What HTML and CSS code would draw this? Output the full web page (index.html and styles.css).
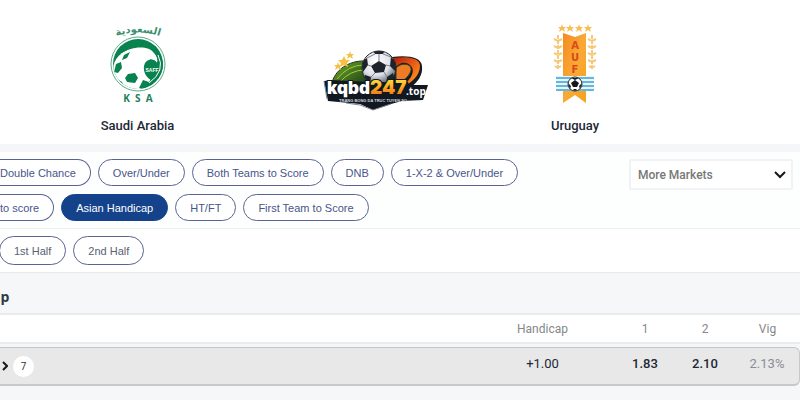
FILE: index.html
```html
<!DOCTYPE html>
<html lang="en">
<head>
  <meta charset="UTF-8">
  <meta name="viewport" content="width=device-width, initial-scale=1.0">
  <title>Saudi Arabia - Uruguay</title>
  <link rel="stylesheet" href="styles.css">
</head>
<body>
  <header class="match">
    <div class="team">
      <svg class="crest" viewBox="0 0 80 84" aria-hidden="true">
        <defs>
          <path id="crestArc" d="M13 16 Q40 5 67 16"/>
          <clipPath id="crestClip"><circle cx="40" cy="42" r="25"/></clipPath>
        </defs>
        <text class="crest-arabic" text-anchor="middle"><textPath href="#crestArc" startOffset="50%">السعودية</textPath></text>
        <circle cx="40" cy="42" r="27" fill="#fff" stroke="#5fa98c" stroke-width="1"/>
        <g clip-path="url(#crestClip)">
          <rect x="14" y="16" width="54" height="52" fill="#08824f"/>
          <circle cx="35" cy="48" r="20" fill="#fff"/>
          <path d="M23 32 C31 25 50 22 56 31 C59 34 60 38 59 41 C55 36 50 37 47 41 L32 42Z" fill="#fff"/>
          <path d="M59 41 C55 36 50 37 47 41 C44 47 47 55 53 58 L66 56 V38Z" fill="#08824f"/>
          <path d="M26 33 L32 30 L29 36 L24 38Z M18 42 L23 40 L24 46 L20 51 L16 50Z M30 52 L37 51 L40 56 L37 61 L29 60 L27 56Z M45 58 L51 60 L48 66 L41 66Z M19 57 L24 60 L26 65 L20 64Z" fill="#08824f"/>
          <path d="M60 33 Q68 49 51 61" fill="none" stroke="#fff" stroke-width="1"/>
        </g>
        <text class="crest-saff" x="54" y="50" text-anchor="middle">SAFF</text>
        <text class="crest-code" x="40" y="80" text-anchor="middle">K&#160; S&#160; A</text>
      </svg>
      <span class="team-name">Saudi Arabia</span>
    </div>
    <div class="brand">
      <svg class="brand-logo" viewBox="0 0 106 64" role="img" aria-label="kqbd247.top">
        <defs>
          <linearGradient id="gold" x1="0" y1="0" x2="0" y2="1">
            <stop offset="0.2" stop-color="#ffd43c"/>
            <stop offset="0.9" stop-color="#f36b0a"/>
          </linearGradient>
          <linearGradient id="leaf" x1="0" y1="0" x2="1" y2="1">
            <stop offset="0" stop-color="#78ae28"/>
            <stop offset="1" stop-color="#123516"/>
          </linearGradient>
          <linearGradient id="flame" x1="0" y1="0" x2="1" y2="1">
            <stop offset="0" stop-color="#b51c0a"/>
            <stop offset="0.6" stop-color="#f36b16"/>
            <stop offset="1" stop-color="#ffb02e"/>
          </linearGradient>
          <radialGradient id="ball" cx="0.4" cy="0.3" r="0.7">
            <stop offset="0" stop-color="#fff"/>
            <stop offset="0.6" stop-color="#dfe2e8"/>
            <stop offset="1" stop-color="#5c6470"/>
          </radialGradient>
          <clipPath id="ballClip"><circle cx="57" cy="20" r="17"/></clipPath>
        </defs>
        <path d="M10 34 C15 19 30 12 45 13 L46 40 H11Z" fill="url(#leaf)" stroke="#183019"/>
        <path d="M15 31 Q26 17 42 17 M18 34 Q28 22 43 22" fill="none" stroke="#9fce3a" stroke-width="1"/>
        <path d="M70 9 C86 7 99 9 100 18 C101 27 96 34 88 40 H62Z" fill="#171b1f"/>
        <path d="M71 10 C86 8 98 10 98 18 C98 27 90 35 81 38 C90 30 94 22 88 17 C83 13 77 15 73 20Z" fill="url(#flame)"/>
        <path d="M74 20 C80 13 93 16 88 25 C85 31 79 34 74 36Z" fill="#ef7c25" stroke="#27451c" stroke-width="1"/>
        <path d="M22 8 L24 12 L28 12 L25 15 L26 19 L22 17 L18 19 L19 15 L16 12 L20 12Z M28 3 L29 6 L32 6 L30 8 L31 11 L28 9 L25 11 L26 8 L24 6 L27 6Z M16 14 L17 17 L20 17 L18 19 L19 22 L16 20 L13 22 L14 19 L12 17 L15 17Z" fill="#f6c044"/>
        <circle cx="57" cy="20" r="17" fill="url(#ball)" stroke="#20252c"/>
        <g clip-path="url(#ballClip)">
          <path d="M57 13 L64 17 L62 24 L53 25 L49 18Z M51 2 L63 2 L61 6 L53 6Z M39 14 L45 10 L46 17 L41 24Z M69 9 L75 15 L74 24 L68 18Z M43 27 L49 29 L48 36 H40Z M65 29 L71 25 L74 37 H64Z" fill="#1d222b"/>
          <path d="M57 13 V6 M64 17 L68 18 M62 24 L65 29 M53 25 L49 29 M49 18 L46 17 M45 10 L53 6 M61 6 L69 9" fill="none" stroke="#7a808a" stroke-width="1"/>
        </g>
        <path d="M2 33 L10 32 L46 34 H86 L87 37 L106 37 L101 52 L80 53 L69 56 L51 62 L38 56 L6 53Z" fill="#111820"/>
        <path d="M5 51 L2 33 M24 55 L38 57 L51 62 L69 56" fill="none" stroke="#7d858e" stroke-width="1"/>
        <text class="brand-word" x="5" y="46">kqbd</text>
        <text class="brand-number" x="48" y="46">247</text>
        <text class="brand-tld" x="84" y="47">.top</text>
        <text class="brand-tagline" x="51" y="54" text-anchor="middle">TRANG BONG DA TRUC TUYEN SO</text>
      </svg>
    </div>
    <div class="team">
      <svg class="crest" viewBox="0 0 80 84" aria-hidden="true">
        <defs>
          <linearGradient id="ribbon" x1="0" y1="0" x2="1" y2="1">
            <stop offset="0" stop-color="#f58a22"/>
            <stop offset="0.5" stop-color="#f9a935"/>
            <stop offset="1" stop-color="#f7a11c"/>
          </linearGradient>
          <path id="star" d="M0 -4 L1 -1 L4 -1 L2 1 L3 4 L0 2 L-3 4 L-2 1 L-4 -1 L-1 -1Z" fill="#f8be52"/>
          <path id="sprig" d="M0 0 V34 M-4 4 L0 6 L4 4 M-4 11 L0 13 L4 11 M-4 18 L0 20 L4 18 M-4 25 L0 27 L4 25 M-3 31 L0 33 L3 31" fill="none" stroke="#f6c878" stroke-width="2" stroke-dasharray="4 1"/>
        </defs>
        <use href="#star" x="27" y="6"/>
        <use href="#star" x="35" y="6"/>
        <use href="#star" x="44" y="6"/>
        <use href="#star" x="53" y="6"/>
        <use href="#sprig" x="23" y="13"/>
        <use href="#sprig" x="57" y="13"/>
        <path d="M28 11 L40 15 L51 11 V81 L40 73 L28 81Z" fill="url(#ribbon)"/>
        <text class="auf" x="40" y="27" text-anchor="middle">A</text>
        <text class="auf" x="40" y="39" text-anchor="middle">U</text>
        <text class="auf" x="40" y="51" text-anchor="middle">F</text>
        <rect x="21" y="54" width="38" height="14" fill="#e8f5fb"/>
        <path d="M21 56 H59 M21 60 H59 M21 64 H59 M21 68 H59" stroke="#65b5dc" stroke-width="2"/>
        <circle cx="40" cy="62" r="7" fill="#fff" stroke="#20242a"/>
        <path d="M40 58 L44 61 L42 65 H38 L36 61Z M36 56 H44 L40 58Z M33 61 L36 64 L35 67Z M47 61 L44 64 L45 67Z M38 67 H42 L40 69Z" fill="#15181c"/>
      </svg>
      <span class="team-name">Uruguay</span>
    </div>
  </header>

  <main>
    <section class="markets">
      <div class="market-list">
        <div class="chip-row">
          <button type="button" class="chip chip-cut">Double Chance</button>
          <button type="button" class="chip">Over/Under</button>
          <button type="button" class="chip">Both Teams to Score</button>
          <button type="button" class="chip">DNB</button>
          <button type="button" class="chip">1-X-2 &amp; Over/Under</button>
        </div>
        <div class="chip-row">
          <button type="button" class="chip chip-cut">to score</button>
          <button type="button" class="chip active">Asian Handicap</button>
          <button type="button" class="chip">HT/FT</button>
          <button type="button" class="chip">First Team to Score</button>
        </div>
      </div>
      <div class="more">
        <select class="more-select" aria-label="More Markets">
          <option>More Markets</option>
        </select>
        <svg class="more-arrow" viewBox="0 0 12 8" aria-hidden="true"><path d="M1 1 L6 6 L11 1"/></svg>
      </div>
    </section>

    <section class="periods">
      <button type="button" class="chip">1st Half</button>
      <button type="button" class="chip">2nd Half</button>
    </section>

    <h2 class="odds-title">ap</h2>

    <table class="odds">
      <thead>
        <tr>
          <th class="col-toggle" aria-label="Bookmakers"></th>
          <th class="col-handicap">Handicap</th>
          <th class="col-odd">1</th>
          <th class="col-odd">2</th>
          <th class="col-vig">Vig</th>
        </tr>
      </thead>
      <tbody>
        <tr>
          <td>
            <button type="button" class="toggle" aria-label="Show 7 bookmakers">
              <svg class="toggle-arrow" viewBox="0 0 6 10" aria-hidden="true"><path d="M1 1 L5 5 L1 9"/></svg>
              <span class="count">7</span>
            </button>
          </td>
          <td class="handicap">+1.00</td>
          <td class="odd">1.83</td>
          <td class="odd">2.10</td>
          <td class="vig">2.13%</td>
        </tr>
      </tbody>
    </table>
  </main>
</body>
</html>
```
FILE: styles.css
```css
/* Global Styles */
* {
  box-sizing: border-box;
}

body {
  font-family: Roboto, Arial, sans-serif;
  font-size: 13px;
  margin: 0;
  min-height: 100vh;
  overflow-x: hidden;
  background-color: #f5f7f9;
  color: #1d2736;
}

button {
  font: inherit;
  cursor: pointer;
}

/* Match Header */
.match {
  display: grid;
  grid-template-columns: 275fr 200fr 200fr 125fr;
  align-items: start;
  padding: 22px 0 10px;
  background-color: #fff;
  border-bottom: 8px solid #f5f6f7;
}

.team {
  display: flex;
  flex-direction: column;
  align-items: center;
  gap: 12px;
}

.crest {
  width: 80px;
  height: 84px;
}

.team-name {
  font-weight: 500;
  line-height: 16px;
}

.crest-arabic {
  font: bold 10px "DejaVu Sans", sans-serif;
  fill: #3c8f6e;
}

.crest-saff {
  font: bold 5px "Liberation Sans", sans-serif;
  fill: #fff;
}

.crest-code {
  font: bold 10px "Open Sans", sans-serif;
  fill: #23805a;
}

.auf {
  font: bold 10px "DejaVu Sans", sans-serif;
  fill: #d9481c;
}

.brand {
  display: flex;
  justify-content: center;
  padding-top: 26px;
}

.brand-logo {
  width: 106px;
  height: 64px;
}

.brand-word,
.brand-number {
  font: 900 17px Inter, sans-serif;
  fill: #fff;
  stroke: #111820;
  stroke-width: 2px;
  paint-order: stroke;
}

.brand-number {
  font-size: 19px;
  fill: url(#gold);
}

.brand-tld {
  font: bold 10px "Open Sans", sans-serif;
  fill: #fff;
}

.brand-tagline {
  font: bold 4px "Liberation Sans", sans-serif;
  fill: #d6dbe0;
}

/* Markets */
.markets {
  display: flex;
  justify-content: space-between;
  padding: 7px 7px 7px 0;
  background-color: #fdfefe;
  border-bottom: 1px solid #eceeef;
}

.market-list {
  display: flex;
  flex-direction: column;
  gap: 8px;
}

.chip-row,
.periods {
  display: flex;
  gap: 7px;
}

.chip {
  height: 27px;
  padding: 0 14px;
  border: 1px solid #5a6394;
  border-radius: 14px;
  background-color: #fff;
  color: #47568a;
  font-family: "Liberation Sans", Arial, sans-serif;
  font-size: 11px;
  white-space: nowrap;
}

.chip-cut {
  padding-left: 0;
  border-left: none;
  border-top-left-radius: 0;
  border-bottom-left-radius: 0;
}

.chip.active {
  background-color: #14438c;
  border-color: #14438c;
  color: #fff;
}

.more {
  position: relative;
  width: 164px;
}

.more-select {
  appearance: none;
  width: 100%;
  height: 31px;
  padding: 0 7px;
  border: 2px solid #f1f2f3;
  border-radius: 2px;
  background-color: #fff;
  color: #777;
  font-family: inherit;
  font-size: 12px;
  font-weight: 500;
}

.more-arrow {
  position: absolute;
  top: 12px;
  right: 7px;
  width: 12px;
  height: 8px;
  pointer-events: none;
}

.more-arrow path,
.toggle-arrow path {
  fill: none;
  stroke: #15181c;
  stroke-width: 2px;
}

.periods {
  padding: 7px 0;
  margin-left: -1px;
  background-color: #fff;
  border-bottom: 1px solid #e6eaec;
}

.periods .chip {
  height: 29px;
  border-radius: 15px;
  color: #596174;
}

/* Odds Table */
.odds-title {
  margin: 0 0 0 -8px;
  padding-top: 8px;
  font-family: "Open Sans", sans-serif;
  font-size: 14px;
  line-height: 32px;
  color: #2b3a42;
}

.odds {
  width: 100%;
  table-layout: fixed;
  border-collapse: separate;
  border-spacing: 0;
}

.odds th {
  height: 31px;
  padding: 0;
  background-color: #fff;
  border-top: 2px solid #e9ecec;
  border-bottom: 2px solid #e9ebec;
  color: #85878a;
  font-size: 12px;
  font-weight: 400;
}

.col-handicap {
  width: 145px;
}

.col-odd {
  width: 60px;
}

.col-vig {
  width: 65px;
}

.odds tbody::before {
  content: "";
  display: block;
  height: 3px;
}

.odds td {
  height: 39px;
  padding: 0 0 6px;
  background-color: #e8e8e8;
  border-top: 1px solid #c3c6c9;
  border-bottom: 2px solid #c6c8ca;
  text-align: center;
}

.odds td:first-child {
  padding: 0;
}

.odds td:last-child {
  border-right: 1px solid #c6c8ca;
  border-top-right-radius: 6px;
  border-bottom-right-radius: 6px;
}

.odd {
  font-weight: 500;
}

.vig {
  color: #8b8d92;
}

.toggle {
  display: flex;
  align-items: center;
  gap: 5px;
  padding: 0 0 0 2px;
  border: none;
  background: none;
  color: #333;
}

.toggle-arrow {
  width: 6px;
  height: 10px;
}

.count {
  width: 21px;
  border-radius: 50%;
  background-color: #fff;
  font-size: 10px;
  line-height: 21px;
}
```
